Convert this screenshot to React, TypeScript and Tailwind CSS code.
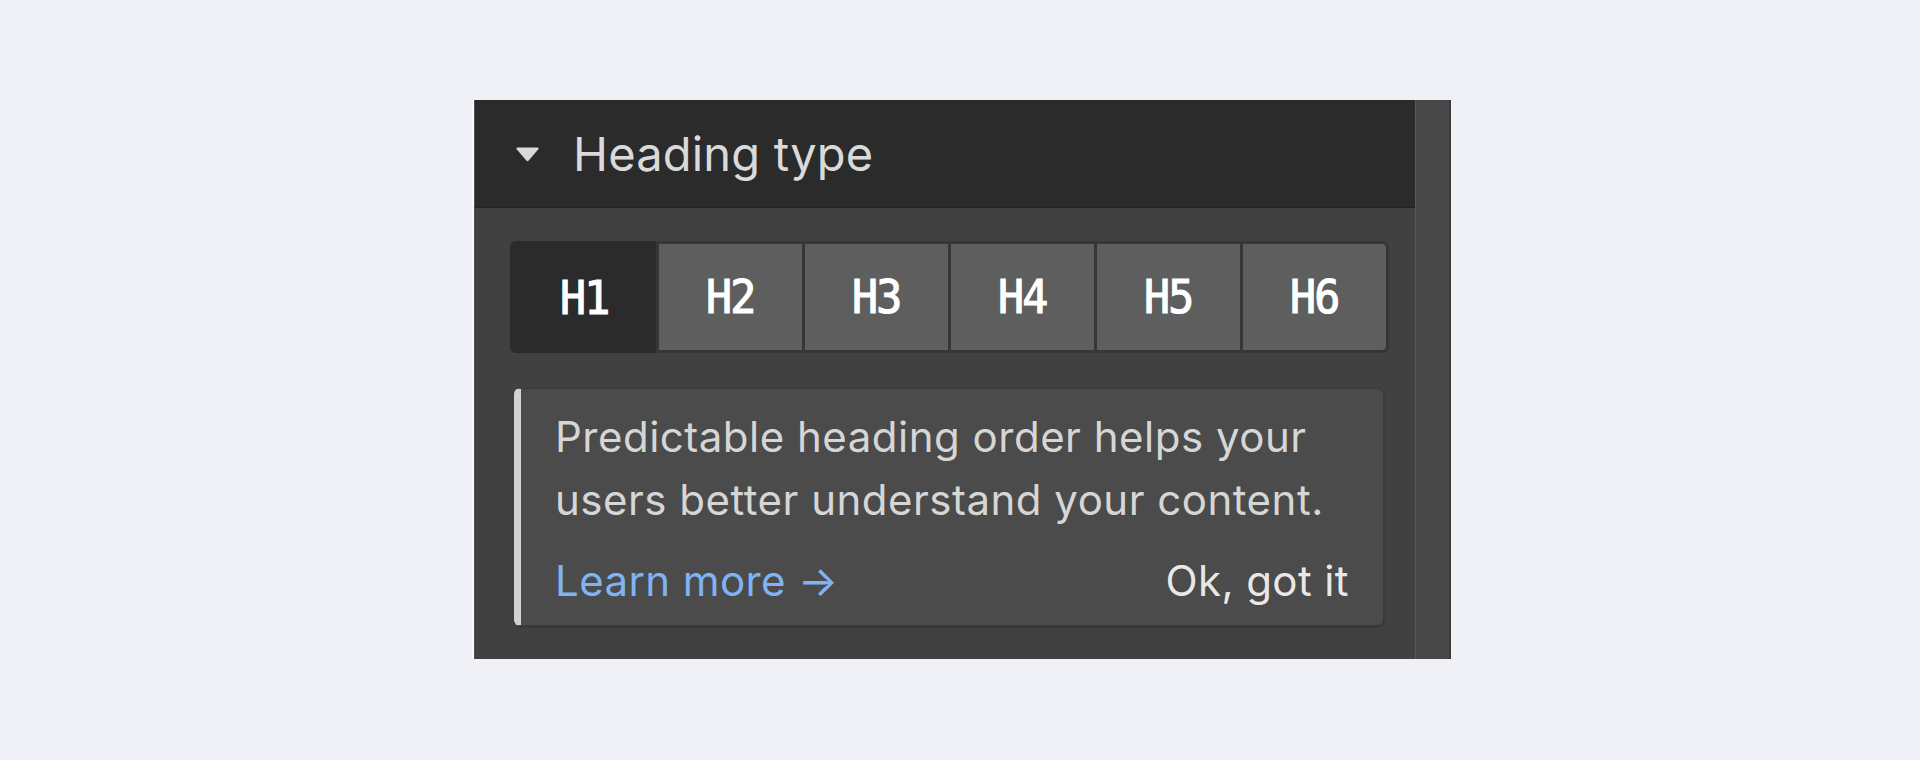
import React from "react";

const headings = ["H1", "H2", "H3", "H4", "H5", "H6"];

export default function App() {
  return (
    <div className="min-h-[760px] w-full bg-[#f0f1f7] pl-[472px] pt-[100px]" style={{ fontFamily: "Inter, 'Noto Sans', sans-serif" }}>
      <div className="flex h-[559px] w-[979px] border-l-2 border-l-[#f9f9fb]">
        <div className="flex w-[941px] flex-col border-l border-l-[#505050] bg-[#414141]">
          <div className="flex h-[108px] shrink-0 items-center border-b border-b-[#232323] bg-[#2b2b2b] pl-[40px]">
            <svg width="25" height="16" viewBox="0 0 25 16" className="shrink-0">
              <path d="M2.5 1.5 L22.5 1.5 Q24.5 1.5 23.3 3.2 L13.7 14.6 Q12.5 16 11.3 14.6 L1.7 3.2 Q0.5 1.5 2.5 1.5 Z" fill="#d9d9d9" />
            </svg>
            <span className="ml-[33px] text-[47px] leading-none tracking-[0.2px] text-[#dadada]">Heading type</span>
          </div>
          <div className="flex flex-col pl-[35px] pr-[26px] pt-[33px]">
            <div className="flex h-[112px] gap-[3px] rounded-[6px] bg-[#363636] p-[3px]">
              {headings.map((h, i) => (
                <div
                  key={h}
                  className={
                    i === 0
                      ? "-my-[3px] -ml-[3px] flex flex-1 items-center justify-center rounded-l-[6px] bg-[#2b2b2b] pb-[2px] pl-[3px] pt-[3px]"
                      : i === 5
                      ? "flex flex-1 items-center justify-center rounded-r-[4px] bg-[#5e5e5e] pb-[2px]"
                      : "flex flex-1 items-center justify-center bg-[#5e5e5e] pb-[2px]"
                  }
                >
                  <span
                    className="text-[47px] font-normal leading-none tracking-[-2px] text-white [-webkit-text-stroke:1.2px_#ffffff]"
                    style={{ fontFamily: "'DejaVu Sans Mono', monospace", transform: "scaleX(0.92)" }}
                  >
                    {h}
                  </span>
                </div>
              ))}
            </div>
            <div className="ml-[4px] mr-[5px] mt-[35px] flex h-[238px] flex-col rounded-[6px] border border-[#3a3a3a] border-l-[7px] border-l-[#d2d2d2] bg-[#4b4b4b] pl-[34px] pr-[34px] pt-[16px] shadow-[0_1px_2px_rgba(0,0,0,0.25)]">
              <p className="text-[42px] leading-[63px] tracking-[0.5px] text-[#d6d6d6]">
                Predictable heading order helps your users better understand your content.
              </p>
              <div className="mt-[18px] flex items-center justify-between text-[42px] leading-[63px] tracking-[0.4px]">
                <span className="text-[#80b3f4]">Learn more →</span>
                <span className="text-[#e8e8e8]">Ok, got it</span>
              </div>
            </div>
          </div>
        </div>
        <div className="w-[36px] border-l border-l-[#585858] border-r-2 border-r-[#3a3a3a] bg-[#474747]" />
      </div>
    </div>
  );
}
